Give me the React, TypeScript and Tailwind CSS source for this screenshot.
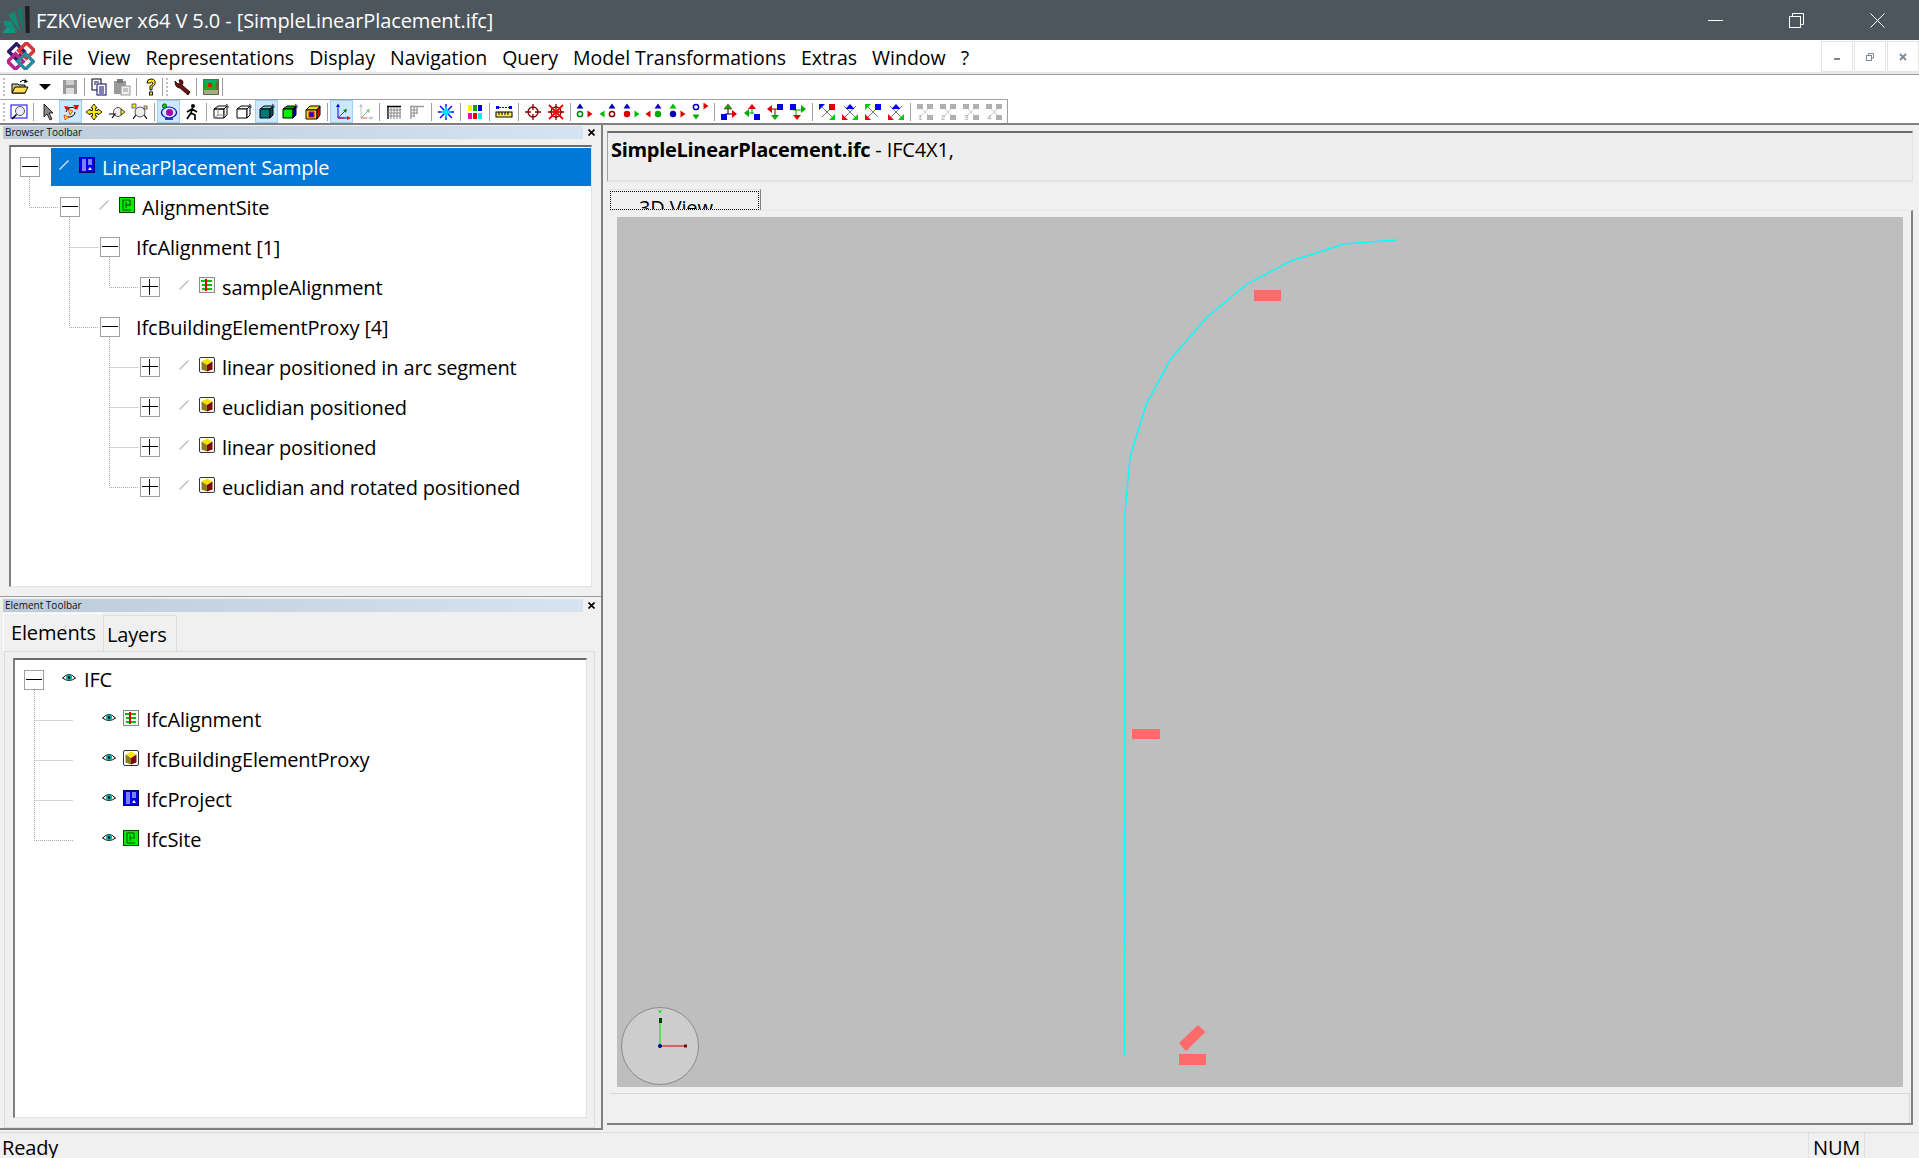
import React from "react";

type IconProps = { children: React.ReactNode; className?: string };

const Svg = ({ children, className = "w-[18px] h-[18px]" }: IconProps) => (
  <svg viewBox="0 0 18 18" className={className}>
    {children}
  </svg>
);

const Cube = ({ top, left, right, wire }: { top: string; left: string; right: string; wire?: boolean }) => (
  <Svg>
    <path d="M2 6 L6 3 L15 3 L12 6 Z" fill={top} stroke="#000" />
    <path d="M2 6 H12 V15 H2 Z" fill={left} stroke="#000" />
    <path d="M12 6 L15 3 V12 L12 15 Z" fill={right} stroke="#000" />
    {wire && <path d="M6 3 V12 H15 M6 12 L2 15" fill="none" stroke="#888" />}
    <path d="M14 1 Q17 2 16 5" fill="none" stroke="#336" />
  </Svg>
);

const Tri = ({ x, y, d, c }: { x: number; y: number; d: "u" | "d" | "l" | "r"; c: string }) => {
  const p = {
    u: `${x - 3.5},${y + 2.5} ${x + 3.5},${y + 2.5} ${x},${y - 2.5}`,
    d: `${x - 3.5},${y - 2.5} ${x + 3.5},${y - 2.5} ${x},${y + 2.5}`,
    l: `${x + 2.5},${y - 3.5} ${x + 2.5},${y + 3.5} ${x - 2.5},${y}`,
    r: `${x - 2.5},${y - 3.5} ${x - 2.5},${y + 3.5} ${x + 2.5},${y}`,
  }[d];
  return <polygon points={p} fill={c} />;
};

const Dot = ({ x, y, c, hollow }: { x: number; y: number; c: string; hollow?: boolean }) => (
  <circle cx={x} cy={y} r={hollow ? 2.6 : 3.2} fill={hollow ? "#fff" : c} stroke={c} strokeWidth={hollow ? 1.5 : 0} />
);

const Corners = ({ tl, tr, bl, br, up }: { tl: string; tr: string; bl: string; br: string; up?: boolean }) => (
  <Svg>
    <path d="M3 3 L9 9 L15 3 M9 9 L3 15 M9 9 L15 15" stroke="#555" fill="none" strokeWidth="0.8" />
    {up ? (
      <polygon points="4.5,6 13.5,6 9,1" fill={tl} />
    ) : (
      <>
        <polygon points="1,1 7,1 1,7" fill={tl} />
        <rect x="11" y="1" width="6" height="6" fill={tr} />
      </>
    )}
    <polygon points="1,11 1,17 7,17" fill={bl} />
    <polygon points="17,11 17,17 11,17" fill={br} />
  </Svg>
);

const GrayCorner = ({ n }: { n: string }) => (
  <Svg>
    <path d="M3 3 L15 15 M15 3 L3 15" stroke="#ccc" />
    <rect x="1" y="1" width="6" height="5" fill="#b0b0b0" />
    <rect x="11" y="1" width="6" height="5" fill="#b0b0b0" />
    <rect x="11" y="12" width="6" height="5" fill="#b0b0b0" />
    <text x="2" y="17" fontSize="8" fill="#aaa" fontFamily="Liberation Sans, sans-serif">
      {n}
    </text>
  </Svg>
);

const Axes = ({ faded }: { faded?: boolean }) => (
  <Svg>
    <g opacity={faded ? 0.5 : 1}>
      <path d="M5 3 V15 H16" stroke={faded ? "#889" : "#00f"} fill="none" />
      <path d="M5 15 L12 8" stroke="#080" fill="none" />
      <polygon points="3,4 7,4 5,0.5" fill={faded ? "#889" : "#00f"} />
      <polygon points="14,13 14,17 18,15" fill={faded ? "#999" : "#f00"} />
      <polygon points="10,7 14,6 13,10" fill="#080" />
      <path d="M5 15 H11" stroke="#f00" />
    </g>
  </Svg>
);

const GridIco = ({ faded }: { faded?: boolean }) => (
  <Svg>
    <path d="M2 3.5 H16 M3 3 V16" stroke={faded ? "#999" : "#000"} strokeWidth="1.4" />
    <path d={faded ? "M3 7 H10 M3 10 H10 M3 13 H7 M6 4 V14 M9 4 V11" : "M3 7 H16 M3 10 H16 M3 13 H16 M6 4 V16 M9 4 V16 M12 4 V16 M15 4 V16"} stroke="#888" strokeWidth="1" />
  </Svg>
);

const icons: Record<string, React.ReactNode> = {
  zoomWin: (
    <Svg>
      <rect x="1" y="2" width="16" height="13" fill="#fff" stroke="#00f" />
      <circle cx="10" cy="8" r="4.5" fill="#eee" stroke="#555" />
      <path d="M6.5 11.5 L2 16" stroke="#000" strokeWidth="1.6" />
    </Svg>
  ),
  cursor: (
    <Svg>
      <polygon points="5,1 14,10 10,10 13,16 11,17 8,11 5,14" fill="#888" stroke="#000" strokeWidth="0.8" />
    </Svg>
  ),
  orbit: (
    <Svg>
      <path d="M4 9 A6 6 0 0 1 14 6 M13 9 A6 5 0 0 1 6 14" fill="none" stroke="#000" />
      <polygon points="11,2 17,2 15,7" fill="#e00" />
      <polygon points="2,3 8,4 4,7" fill="#e00" />
      <polygon points="2,12 7,14 3,17" fill="#fd0" stroke="#e00" strokeWidth="0.6" />
      <polygon points="6,6 11,8 8,12" fill="#fd0" stroke="#e00" strokeWidth="0.6" />
    </Svg>
  ),
  pan: (
    <Svg>
      <polygon points="9,1 12,5 10.5,5 10.5,7.5 13,7.5 13,6 17,9 13,12 13,10.5 10.5,10.5 10.5,13 12,13 9,17 6,13 7.5,13 7.5,10.5 5,10.5 5,12 1,9 5,6 5,7.5 7.5,7.5 7.5,5 6,5" fill="#fe0" stroke="#000" strokeWidth="0.8" />
    </Svg>
  ),
  swirl: (
    <Svg>
      <circle cx="10" cy="9" r="4.5" fill="#eee" stroke="#555" />
      <path d="M1 11 H7 L4 15" fill="none" stroke="#000" strokeWidth="1.2" />
      <polygon points="13,6 17,9 13,12" fill="#fe0" stroke="#000" strokeWidth="0.7" />
    </Svg>
  ),
  swirl2: (
    <Svg>
      <circle cx="9" cy="9" r="5" fill="#eee" stroke="#555" />
      <path d="M5 12 L2 16 M13 12 L16 16" stroke="#000" strokeWidth="1.2" />
      <rect x="1" y="1" width="4" height="4" fill="#fe0" stroke="#00a" strokeWidth="0.6" />
      <rect x="13" y="3" width="3" height="3" fill="#fe0" stroke="#00a" strokeWidth="0.6" />
    </Svg>
  ),
  camera: (
    <Svg>
      <ellipse cx="9" cy="9.5" rx="7.5" ry="5.5" fill="none" stroke="#00a" strokeWidth="1.2" />
      <circle cx="9.5" cy="9.5" r="3.5" fill="#a0a" />
      <circle cx="4.5" cy="3" r="2.2" fill="#0c0" stroke="#000" strokeWidth="0.5" />
      <path d="M5 16 H13" stroke="#00a" strokeWidth="1.5" />
    </Svg>
  ),
  walk: (
    <Svg>
      <circle cx="10" cy="3" r="2" fill="#000" />
      <path d="M9.5 5 L8 10 L4 16 M8 10 L12 12 L12 17 M9 6 L4 9 M9 6 L14 9" stroke="#000" strokeWidth="1.7" fill="none" />
    </Svg>
  ),
  cubeWire: <Cube top="#fff" left="none" right="#fff" wire />,
  cubeWhite: <Cube top="#fff" left="#fff" right="#fff" />,
  cubeTeal: <Cube top="#7cc" left="#077" right="#055" />,
  cubeGreen: <Cube top="#0a0" left="#0e0" right="#00a" />,
  cubeColor: (
    <Svg>
      <path d="M2 7 L6 3 L16 3 L13 7 Z" fill="#fd0" stroke="#000" />
      <path d="M2 7 H13 V16 H2 Z" fill="#fd0" stroke="#000" />
      <path d="M13 7 L16 3 V12 L13 16 Z" fill="#e00" stroke="#000" />
      <rect x="5" y="9" width="5" height="5" fill="#00f" stroke="#e00" />
    </Svg>
  ),
  axes: <Axes />,
  axesFaded: <Axes faded />,
  grid: <GridIco />,
  gridFaded: <GridIco faded />,
  star: (
    <Svg>
      <path d="M9 1 V17 M1 9 H17 M3 3 L15 15 M15 3 L3 15" stroke="#00f" strokeWidth="1.4" />
      <polygon points="9,3 11,7 15,9 11,11 9,15 7,11 3,9 7,7" fill="#0df" />
    </Svg>
  ),
  blocks: (
    <Svg>
      <rect x="2" y="2" width="4" height="6" fill="#fe0" />
      <rect x="7" y="2" width="4" height="6" fill="#0a0" />
      <rect x="12" y="2" width="4" height="6" fill="#00e" />
      <rect x="2" y="10" width="4" height="6" fill="#f0a" />
      <rect x="7" y="10" width="4" height="6" fill="#e00" />
      <rect x="12" y="10" width="4" height="6" fill="#0ee" />
    </Svg>
  ),
  ruler: (
    <Svg>
      <rect x="1" y="3" width="3" height="3" fill="#00c" />
      <rect x="14" y="3" width="3" height="3" fill="#00c" />
      <path d="M4 4.5 H14" stroke="#00c" strokeDasharray="2 1" />
      <rect x="1" y="9" width="16" height="5" fill="#fe4" stroke="#000" />
      <path d="M4 9 V12 M7 9 V12 M10 9 V12 M13 9 V12" stroke="#000" />
    </Svg>
  ),
  target: (
    <Svg>
      <circle cx="9" cy="9" r="5" fill="none" stroke="#800" strokeWidth="1.3" />
      <path d="M9 1 V7 M9 11 V17 M1 9 H7 M11 9 H17" stroke="#800" strokeWidth="1.3" />
    </Svg>
  ),
  targetX: (
    <Svg>
      <circle cx="9" cy="9" r="5" fill="none" stroke="#800" strokeWidth="1.3" />
      <path d="M9 1 V17 M1 9 H17" stroke="#800" strokeWidth="1.3" />
      <path d="M2 2 L16 16 M16 2 L2 16" stroke="#f00" strokeWidth="1.8" />
    </Svg>
  ),
  d1: (
    <Svg>
      <Tri x={4} y={3} d="u" c="#00b" />
      <Dot x={4} y={11} c="#080" hollow />
      <Tri x={14} y={11} d="r" c="#d00" />
    </Svg>
  ),
  d2: (
    <Svg>
      <Tri x={3} y={11} d="l" c="#0b0" />
      <Tri x={13} y={3} d="u" c="#00b" />
      <Dot x={13} y={11} c="#800" hollow />
    </Svg>
  ),
  d3: (
    <Svg>
      <Tri x={5} y={3} d="u" c="#00b" />
      <Dot x={5} y={11} c="#d00" />
      <Tri x={15} y={11} d="r" c="#0b0" />
    </Svg>
  ),
  d4: (
    <Svg>
      <Tri x={3} y={11} d="l" c="#d00" />
      <Tri x={13} y={3} d="u" c="#00b" />
      <Dot x={13} y={11} c="#0a0" />
    </Svg>
  ),
  d5: (
    <Svg>
      <Tri x={5} y={3} d="u" c="#0b0" />
      <Dot x={5} y={11} c="#00b" />
      <Tri x={15} y={11} d="r" c="#d00" />
    </Svg>
  ),
  d6: (
    <Svg>
      <Dot x={5} y={4} c="#00b" hollow />
      <Tri x={15} y={3} d="r" c="#d00" />
      <Tri x={5} y={14} d="d" c="#0a0" />
    </Svg>
  ),
  m1: (
    <Svg>
      <path d="M8 5 V11 M5 11 H13" stroke="#000" fill="none" />
      <polygon points="4,6 12,6 8,1" fill="#0a0" stroke="#800" strokeWidth="0.5" />
      <polygon points="12,7 12,15 17,11" fill="#d00" />
      <rect x="1" y="11" width="6" height="6" fill="#00d" />
    </Svg>
  ),
  m2: (
    <Svg>
      <path d="M9 5 V11 M4 10 H11" stroke="#0a0" fill="none" />
      <polygon points="5,6 13,6 9,1" fill="#d00" />
      <polygon points="6,6 6,14 1,10" fill="#0a0" />
      <rect x="11" y="11" width="6" height="6" fill="#00d" />
    </Svg>
  ),
  m3: (
    <Svg>
      <path d="M9 6 V12 M6 6 H14" stroke="#800" fill="none" />
      <polygon points="6,2 6,10 1,6" fill="#d00" />
      <rect x="11" y="1" width="6" height="6" fill="#00d" />
      <polygon points="5,12 13,12 9,17" fill="#0a0" />
    </Svg>
  ),
  m4: (
    <Svg>
      <path d="M7 6 V12 M4 7 H13" stroke="#0a0" fill="none" />
      <rect x="1" y="1" width="6" height="6" fill="#00d" />
      <polygon points="12,2 12,10 17,6" fill="#0a0" />
      <polygon points="4,12 12,12 8,17" fill="#d00" />
    </Svg>
  ),
  c1: <Corners tl="#00f" tr="#d00" bl="#fff" br="#0c0" />,
  c2: <Corners up tl="#00f" tr="#00f" bl="#e00" br="#0c0" />,
  c3: <Corners tl="#0c0" tr="#00f" bl="#e00" br="#fff" />,
  c4: <Corners up tl="#00f" tr="#00f" bl="#e00" br="#0c0" />,
  g1: <GrayCorner n="1" />,
  g2: <GrayCorner n="2" />,
  g3: <GrayCorner n="3" />,
  g4: <GrayCorner n="4" />,
  open: (
    <Svg>
      <path d="M1 6 H7 L8 7 H14 V15 H1 Z" fill="#cc9" stroke="#000" />
      <path d="M1 15 L4 9 H17 L14 15 Z" fill="#fd5" stroke="#000" />
      <path d="M9 4 Q12 1 15 3" fill="none" stroke="#000" />
      <polygon points="14,1 17,4 13,5" fill="#000" />
    </Svg>
  ),
  caret: (
    <Svg>
      <polygon points="3,6 15,6 9,12" fill="#000" />
    </Svg>
  ),
  save: (
    <Svg>
      <rect x="2" y="2" width="14" height="14" fill="#999" />
      <rect x="5" y="2" width="8" height="5" fill="#ccc" />
      <rect x="5" y="10" width="8" height="6" fill="#ddd" />
    </Svg>
  ),
  copy: (
    <Svg>
      <rect x="2" y="1" width="9" height="11" fill="#fff" stroke="#000" />
      <rect x="7" y="6" width="9" height="11" fill="#fff" stroke="#006" />
      <path d="M4 4 H9 M4 6 H6 M9 9 H14 M9 11 H14 M9 13 H14 M9 15 H14" stroke="#006" />
    </Svg>
  ),
  paste: (
    <Svg>
      <rect x="1" y="3" width="12" height="13" fill="#999" />
      <rect x="4" y="1" width="6" height="4" fill="#777" />
      <rect x="8" y="8" width="9" height="9" fill="#eee" stroke="#999" />
      <path d="M10 11 H15 M10 13 H15" stroke="#999" />
    </Svg>
  ),
  help: (
    <Svg>
      <path d="M5 5 Q5 1 9 1 Q14 1 13 6 Q12 8 10 9 L10 12 H8 V8 Q11 7 11 5 Q10 3 8 5 Z" fill="#fe0" stroke="#000" strokeWidth="0.9" />
      <rect x="7.5" y="14" width="3" height="3" fill="#fe0" stroke="#000" strokeWidth="0.9" />
    </Svg>
  ),
  wrench: (
    <Svg>
      <path d="M2 3 L5 6 L7 5 L6 2 Q10 1 10 5 L9 7 L17 14 L15 17 L7 10 Q2 10 2 3 Z" fill="#701010" stroke="#000" strokeWidth="0.8" />
    </Svg>
  ),
  model: (
    <Svg>
      <rect x="1" y="1" width="16" height="16" fill="#664" />
      <rect x="2" y="5" width="12" height="7" fill="#2a2" />
      <rect x="6" y="5" width="4" height="4" fill="#e11" />
      <path d="M2 2 H16 L14 5 H2 Z" fill="#1a6" />
      <rect x="2" y="12" width="14" height="4" fill="#aa8" />
    </Svg>
  ),
};

const Sep = ({ className = "mx-[2.5px]" }: { className?: string }) => (
  <div className={`w-px h-[18px] bg-[#a0a0a0] shrink-0 ${className}`} />
);

const Btn = ({ name, active, className = "" }: { name: string; active?: boolean; className?: string }) => (
  <div
    className={`w-[23px] h-[23px] shrink-0 flex items-center justify-center ${
      active ? "bg-[#cce8ff] border border-[#99d1ff]" : ""
    } ${className}`}
  >
    {icons[name]}
  </div>
);

const Grip = () => <div className="w-[2px] h-[18px] shrink-0 border-l-2 border-dotted border-[#c0c0c0]" />;

const rowTwo: (string | null)[] = [
  "zoomWin", null, "cursor", "*orbit", "pan", "swirl", "swirl2", null, "*camera", "walk", null,
  "cubeWire", "cubeWhite", "*cubeTeal", "cubeGreen", "cubeColor", null, "*axes", "axesFaded", null,
  "grid", "gridFaded", null, "star", null, "blocks", null, "ruler", null, "target", "targetX", null,
  "d1", "d2", "d3", "d4", "d5", "d6", null, "m1", "m2", "m3", "m4", null, "c1", "c2", "c3", "c4", null,
  "g1", "g2", "g3", "g4",
];

const Pen = ({ light }: { light?: boolean }) => (
  <svg viewBox="0 0 10 10" className="w-[10px] h-[10px] shrink-0 -mt-[4px]">
    <path d="M0.5 9.5 L9.5 0.5" stroke={light ? "#d6dde6" : "#bdbdbd"} strokeWidth="1.4" />
  </svg>
);

const Eye = () => (
  <svg viewBox="0 0 14 9" className="w-[14px] h-[9px] shrink-0 -mt-[6px]">
    <path d="M0.5 5 Q7 -2 13.5 5 Q7 10 0.5 5 Z" fill="#fff" stroke="#000" />
    <circle cx="7" cy="4.5" r="3" fill="#0aa" />
    <circle cx="7" cy="4.5" r="1.2" fill="#000" />
  </svg>
);

const TreeIcon = ({ kind }: { kind: string }) => (
  <svg viewBox="0 0 16 16" className="w-4 h-4 shrink-0 -mt-[5px]">
    {kind === "project" && (
      <>
        <rect x="0.5" y="0.5" width="15" height="15" fill="#0000ee" stroke="#000060" />
        <path d="M3 3 H7 M3 5 H7 M3 7 H7 M3 9 H7 M3 11 H7 M3 13 H7 M9 3 H13 M9 5 H13 M9 7 H13" stroke="#fff" />
        <path d="M9 13 L11 10 L13 13 Z" fill="#fff" />
      </>
    )}
    {kind === "site" && (
      <>
        <rect x="0.5" y="0.5" width="15" height="15" fill="#00ee00" stroke="#004000" />
        <path d="M4 3 V13 M4 3 H11 V8 M7 8 H12 M7 5 V11 M4 13 H12" stroke="#004000" fill="none" />
      </>
    )}
    {kind === "alignment" && (
      <>
        <rect x="0.5" y="0.5" width="15" height="15" fill="#f6f6f6" stroke="#8a8a8a" />
        <path d="M2 4 H13 M3 8 H13 M3 12 H13" stroke="#00c000" strokeWidth="2" />
        <path d="M7 2 V14" stroke="#e00000" strokeWidth="2" />
      </>
    )}
    {kind === "proxy" && (
      <>
        <rect x="0.5" y="0.5" width="15" height="15" rx="1.5" fill="#fff" stroke="#333" />
        <path d="M2.5 4.5 L8 1.5 L13.5 4.5 L8 8 Z" fill="#f5e400" />
        <path d="M2.5 4.5 L8 8 V14.5 L2.5 12.5 Z" fill="#8f7a20" />
        <path d="M13.5 4.5 L8 8 V14.5 L13.5 12.5 Z" fill="#7a0c0c" />
      </>
    )}
  </svg>
);

const Expander = ({ open }: { open: boolean }) => (
  <div className="relative w-5 h-5 shrink-0 bg-white border border-[#a0a0a0]">
    <div className="absolute left-[1px] right-[1px] top-[8px] h-px bg-black" />
    {!open && <div className="absolute top-[1px] bottom-[1px] left-[8px] w-px bg-black" />}
  </div>
);

const browserRows = [
  { depth: 0, open: true, icon: "project", label: "LinearPlacement Sample", selected: true },
  { depth: 1, open: true, icon: "site", label: "AlignmentSite" },
  { depth: 2, open: true, label: "IfcAlignment [1]" },
  { depth: 3, open: false, icon: "alignment", label: "sampleAlignment" },
  { depth: 2, open: true, label: "IfcBuildingElementProxy [4]" },
  { depth: 3, open: false, icon: "proxy", label: "linear positioned in arc segment" },
  { depth: 3, open: false, icon: "proxy", label: "euclidian positioned" },
  { depth: 3, open: false, icon: "proxy", label: "linear positioned" },
  { depth: 3, open: false, icon: "proxy", label: "euclidian and rotated positioned" },
];

const elementRows = [
  { icon: "alignment", label: "IfcAlignment" },
  { icon: "proxy", label: "IfcBuildingElementProxy" },
  { icon: "project", label: "IfcProject" },
  { icon: "site", label: "IfcSite" },
];

const DockHeader = ({ title }: { title: string }) => (
  <div className="flex items-center h-[13px] pl-[3px]">
    <div className="w-[580px] h-[13px] pl-[2px] bg-gradient-to-r from-[#bccbda] to-[#d6e3f1] text-[10px] leading-[13px] text-[#111] tracking-normal">
      {title}
    </div>
    <svg viewBox="0 0 7 7" className="w-[7px] h-[7px] ml-[5px]">
      <path d="M0.5 0.5 L6.5 6.5 M6.5 0.5 L0.5 6.5" stroke="#000" strokeWidth="1.6" />
    </svg>
  </div>
);

const Scene = () => (
  <svg viewBox="617 217 1286 870" className="w-full h-full block">
    <path
      d="M1396 240 L1344 244 L1291 261 L1247 284 L1207 317 L1170 360 L1146 405 L1130 457 L1125 513 L1124.5 1055"
      fill="none"
      stroke="#00ffff"
      strokeWidth="1.4"
    />
    <rect x="1254" y="290" width="27" height="11" fill="#ff6b6b" />
    <rect x="1132" y="729" width="28" height="10" fill="#ff6b6b" />
    <rect x="1179" y="1054" width="27" height="11" fill="#ff6b6b" />
    <polygon points="1198,1025 1205.5,1032 1186,1051 1179,1043" fill="#ff6b6b" />
    <circle cx="660" cy="1046" r="38.5" fill="#cdcdcd" stroke="#8a8a8a" />
    <path d="M660 1046 V1019" stroke="#00e000" />
    <path d="M660 1046 H686" stroke="#d00000" />
    <rect x="659" y="1018" width="3" height="5" fill="#004000" />
    <rect x="684" y="1044.5" width="3" height="3" fill="#800000" />
    <circle cx="660" cy="1046" r="2" fill="#000080" />
    <path d="M658.5 1010 L660 1013 L661.5 1010" fill="none" stroke="#00e000" />
  </svg>
);

const Logo = () => (
  <svg viewBox="0 0 30 30" className="absolute left-[2px] top-[6px] w-[29px] h-[28px]">
    <polygon points="0,29 14,29 8,18" fill="#0f9a80" />
    <polygon points="1,16 9,16 16,28 2,21" fill="#118f78" />
    <polygon points="6,9 13,6 19,27 10,16" fill="#128a74" />
    <polygon points="16,4 21,2 22,28" fill="#0d7c68" />
    <polygon points="24,0 29,0 29,29 25,29" fill="#1b2024" />
  </svg>
);

const MenuLogo = () => (
  <svg viewBox="0 0 28 28" className="w-7 h-7 shrink-0">
    <g fill="none" strokeWidth="3.4">
      <rect x="4" y="4" width="11" height="11" transform="rotate(45 9.5 9.5)" stroke="#2a1a6a" />
      <rect x="14" y="3" width="11" height="11" transform="rotate(45 19.5 8.5)" stroke="#d8343c" />
      <rect x="3" y="14" width="11" height="11" transform="rotate(45 8.5 19.5)" stroke="#b8248c" />
      <rect x="13" y="14" width="11" height="11" transform="rotate(45 18.5 19.5)" stroke="#2a8a9c" />
    </g>
  </svg>
);

export default function App() {
  return (
    <div className="w-[1919px] h-[1158px] overflow-hidden flex flex-col bg-[#f0f0f0] text-[20px] text-black font-['Open_Sans',sans-serif] tracking-[-0.15px]">
      {/* title bar */}
      <div className="relative h-10 shrink-0 bg-[#4d565c] flex items-center pl-9 text-white text-[20px]">
        <Logo />
        <span className="pt-[2px] tracking-[-0.1px]">FZKViewer x64 V 5.0 - [SimpleLinearPlacement.ifc]</span>
        <div className="ml-auto flex items-center">
          <div className="w-[15px] h-px bg-white mr-[66px]" />
          <svg viewBox="0 0 15 15" className="w-[15px] h-[15px] mr-[66px]">
            <path d="M3.5 3.5 V0.5 H14.5 V11.5 H11.5" fill="none" stroke="#fff" />
            <rect x="0.5" y="3.5" width="11" height="11" fill="none" stroke="#fff" />
          </svg>
          <svg viewBox="0 0 15 15" className="w-[15px] h-[15px] mr-[34px]">
            <path d="M0.5 0.5 L14.5 14.5 M14.5 0.5 L0.5 14.5" stroke="#fff" />
          </svg>
        </div>
      </div>

      {/* menu bar */}
      <div className="h-[34px] shrink-0 bg-white border-b-2 border-[#e8e8e8] flex items-center pl-[7px]">
        <MenuLogo />
        <nav className="flex items-center ml-[7px] pt-[3px] gap-[15px] text-[19.5px] tracking-normal">
          {["File", "View", "Representations", "Display", "Navigation", "Query", "Model Transformations", "Extras", "Window", "?"].map((m) => (
            <span key={m}>{m}</span>
          ))}
        </nav>
        <div className="ml-auto flex self-start pt-px gap-px">
          <div className="w-8 h-[31px] border border-[#e5e5e5] flex items-center justify-center">
            <div className="w-[6px] h-[2px] bg-[#7a8794] mt-[5px]" />
          </div>
          <div className="w-8 h-[31px] border border-[#e5e5e5] flex items-center justify-center">
            <svg viewBox="0 0 8 8" className="w-2 h-2">
              <path d="M2.5 2 V0.5 H7.5 V5 H6" fill="none" stroke="#7a8794" />
              <rect x="0.5" y="2.5" width="5" height="5" fill="none" stroke="#7a8794" />
            </svg>
          </div>
          <div className="w-8 h-[31px] border border-[#e5e5e5] flex items-center justify-center">
            <svg viewBox="0 0 8 8" className="w-2 h-2">
              <path d="M1 1 L7 7 M7 1 L1 7" stroke="#7a8794" strokeWidth="1.8" />
            </svg>
          </div>
        </div>
      </div>

      {/* toolbars */}
      <div className="shrink-0 bg-white border-t border-[#a0a0a0]">
        <div className="h-6 flex items-center pl-[3px]">
          <Grip />
          <Btn name="open" className="ml-[3px]" />
          <Btn name="caret" className="ml-[2px]" />
          <Btn name="save" className="ml-[2px]" />
          <Sep />
          <Btn name="copy" />
          <Btn name="paste" />
          <Sep />
          <Btn name="help" />
          <Sep className="mx-0" />
          <div className="ml-[3px]">
            <Grip />
          </div>
          <Btn name="wrench" className="ml-[2px]" />
          <Sep />
          <Btn name="model" />
          <Sep className="mx-0" />
        </div>
        <div className="w-[1008px] h-6 flex items-center pl-[3px] border-t border-[#a0a0a0] border-r">
          <Grip />
          <div className="flex items-center ml-[2px]">
            {rowTwo.map((b, i) =>
              b === null ? <Sep key={i} /> : <Btn key={i} name={b.replace("*", "")} active={b.startsWith("*")} />
            )}
          </div>
        </div>
      </div>

      {/* docks and view */}
      <div className="flex-1 min-h-0 flex border-t-2 border-[#808080]">
        <div className="w-[603px] shrink-0 flex flex-col border-r-2 border-b-2 border-[#808080] mb-[2px]">
          <div className="pt-[1px]">
            <DockHeader title="Browser Toolbar" />
          </div>
          <div className="relative mt-[6px] ml-[9px] w-[583px] h-[442px] bg-white border-t-2 border-l-2 border-t-[#6d6d6d] border-l-[#808080] border-r border-b border-r-[#e3e3e3] border-b-[#e3e3e3]">
            <svg className="absolute left-0 top-0 w-[200px] h-[400px] pointer-events-none" viewBox="0 0 200 400">
              <path
                d="M18.5 30 V60.5 H48 M58.5 70 V180.5 H88 M58.5 100.5 H88 M98.5 110 V140.5 H128 M98.5 190 V340.5 H128 M98.5 220.5 H128 M98.5 260.5 H128 M98.5 300.5 H128"
                fill="none"
                stroke="#a8a8a8"
                strokeDasharray="1 1"
              />
            </svg>
            {browserRows.map((r) => (
              <div key={r.label} className="relative h-10 flex items-center pl-[9px]" style={{ marginLeft: r.depth * 40 }}>
                <Expander open={r.open} />
                <div
                  className={`ml-[11px] flex-1 h-[38px] flex items-center gap-[10px] ${r.icon ? "pl-2" : "pl-[8px]"} ${
                    r.selected ? "bg-[#0078d7] text-white" : ""
                  }`}
                >
                  {r.icon && <Pen light={r.selected} />}
                  {r.icon && <TreeIcon kind={r.icon} />}
                  <span className="-ml-[3px] mt-[1px] whitespace-nowrap">{r.label}</span>
                </div>
              </div>
            ))}
          </div>

          <div className="h-[10px] shrink-0 border-b border-[#a0a0a0]" />
          <div className="pt-[2px]">
            <DockHeader title="Element Toolbar" />
          </div>

          <div className="flex items-end h-[39px] pl-[3px] shrink-0">
            <div className="w-[100px] h-[38px] flex items-center pl-[7px] border-t border-l border-white">Elements</div>
            <div className="w-[74px] h-9 flex items-center pl-[3px] pt-[2px] border border-b-0 border-[#dcdcdc]">Layers</div>
          </div>
          <div className="ml-[4px] mr-[6px] flex-1 min-h-0 flex flex-col pt-[6px] pb-[9px] pl-[8px] pr-[7px] border border-[#dcdcdc]">
            <div className="relative flex-1 bg-white border-t-2 border-l-2 border-t-[#6d6d6d] border-l-[#808080] border-r border-b border-r-[#e3e3e3] border-b-[#e3e3e3]">
              <svg className="absolute left-0 top-0 w-[80px] h-[200px] pointer-events-none" viewBox="0 0 80 200">
                <path d="M19.5 30 V180.5 H58 M19.5 60.5 H58 M19.5 100.5 H58 M19.5 140.5 H58" fill="none" stroke="#a8a8a8" strokeDasharray="1 1" />
              </svg>
              <div className="relative h-10 flex items-center pl-[9px]">
                <Expander open />
                <div className="ml-[18px]">
                  <Eye />
                </div>
                <span className="ml-[8px]">IFC</span>
              </div>
              {elementRows.map((r) => (
                <div key={r.label} className="relative h-10 flex items-center pl-[87px]">
                  <Eye />
                  <div className="ml-[7px]">
                    <TreeIcon kind={r.icon} />
                  </div>
                  <span className="ml-[7px]">{r.label}</span>
                </div>
              ))}
            </div>
          </div>
        </div>

        <div className="flex-1 min-w-0 flex flex-col pl-[4px] pr-[6px] pt-[6px] pb-[7px]">
          <div className="h-[51px] shrink-0 pl-[3px] pt-[2px] border-t-2 border-l border-t-[#6d6d6d] border-l-[#a0a0a0] border-r border-b-2 border-r-[#e3e3e3] border-b-[#e3e3e3] bg-[#eeeeee]">
            <b className="font-bold tracking-[-0.3px]">SimpleLinearPlacement.ifc</b> - IFC4X1,
          </div>
          <div className="mt-[7px] ml-[2px] h-[21px] shrink-0 w-[152px] overflow-hidden border-r border-[#808080] border-t border-t-[#e3e3e3] p-[1px]">
            <div className="h-[19px] border border-dotted border-black pl-[28px] pt-[2px] leading-7 overflow-hidden">3D View</div>
          </div>
          <div className="flex-1 min-h-0 flex flex-col border-t border-t-[#e8e8e8] border-r-2 border-r-[#808080] border-b-2 border-b-[#808080]">
            <div className="pt-[6px] pl-[10px] pr-[7px]">
              <div className="w-[1286px] h-[870px] bg-[#bebebe]">
                <Scene />
              </div>
            </div>
            <div className="mt-[6px] flex-1 border-t border-[#d8d8d8] border-r mr-[1px] ml-[3px]" />
          </div>
        </div>
      </div>

      {/* status bar */}
      <div className="relative h-[26px] shrink-0 border-t border-[#dcdcdc] pl-[2px] flex overflow-hidden">
        <span className="leading-[30px]">Ready</span>
        <div className="ml-auto mr-[54px] w-[57px] pl-[4px] leading-[30px] border-l border-r border-[#e0e0e0]">NUM</div>
      </div>
    </div>
  );
}
